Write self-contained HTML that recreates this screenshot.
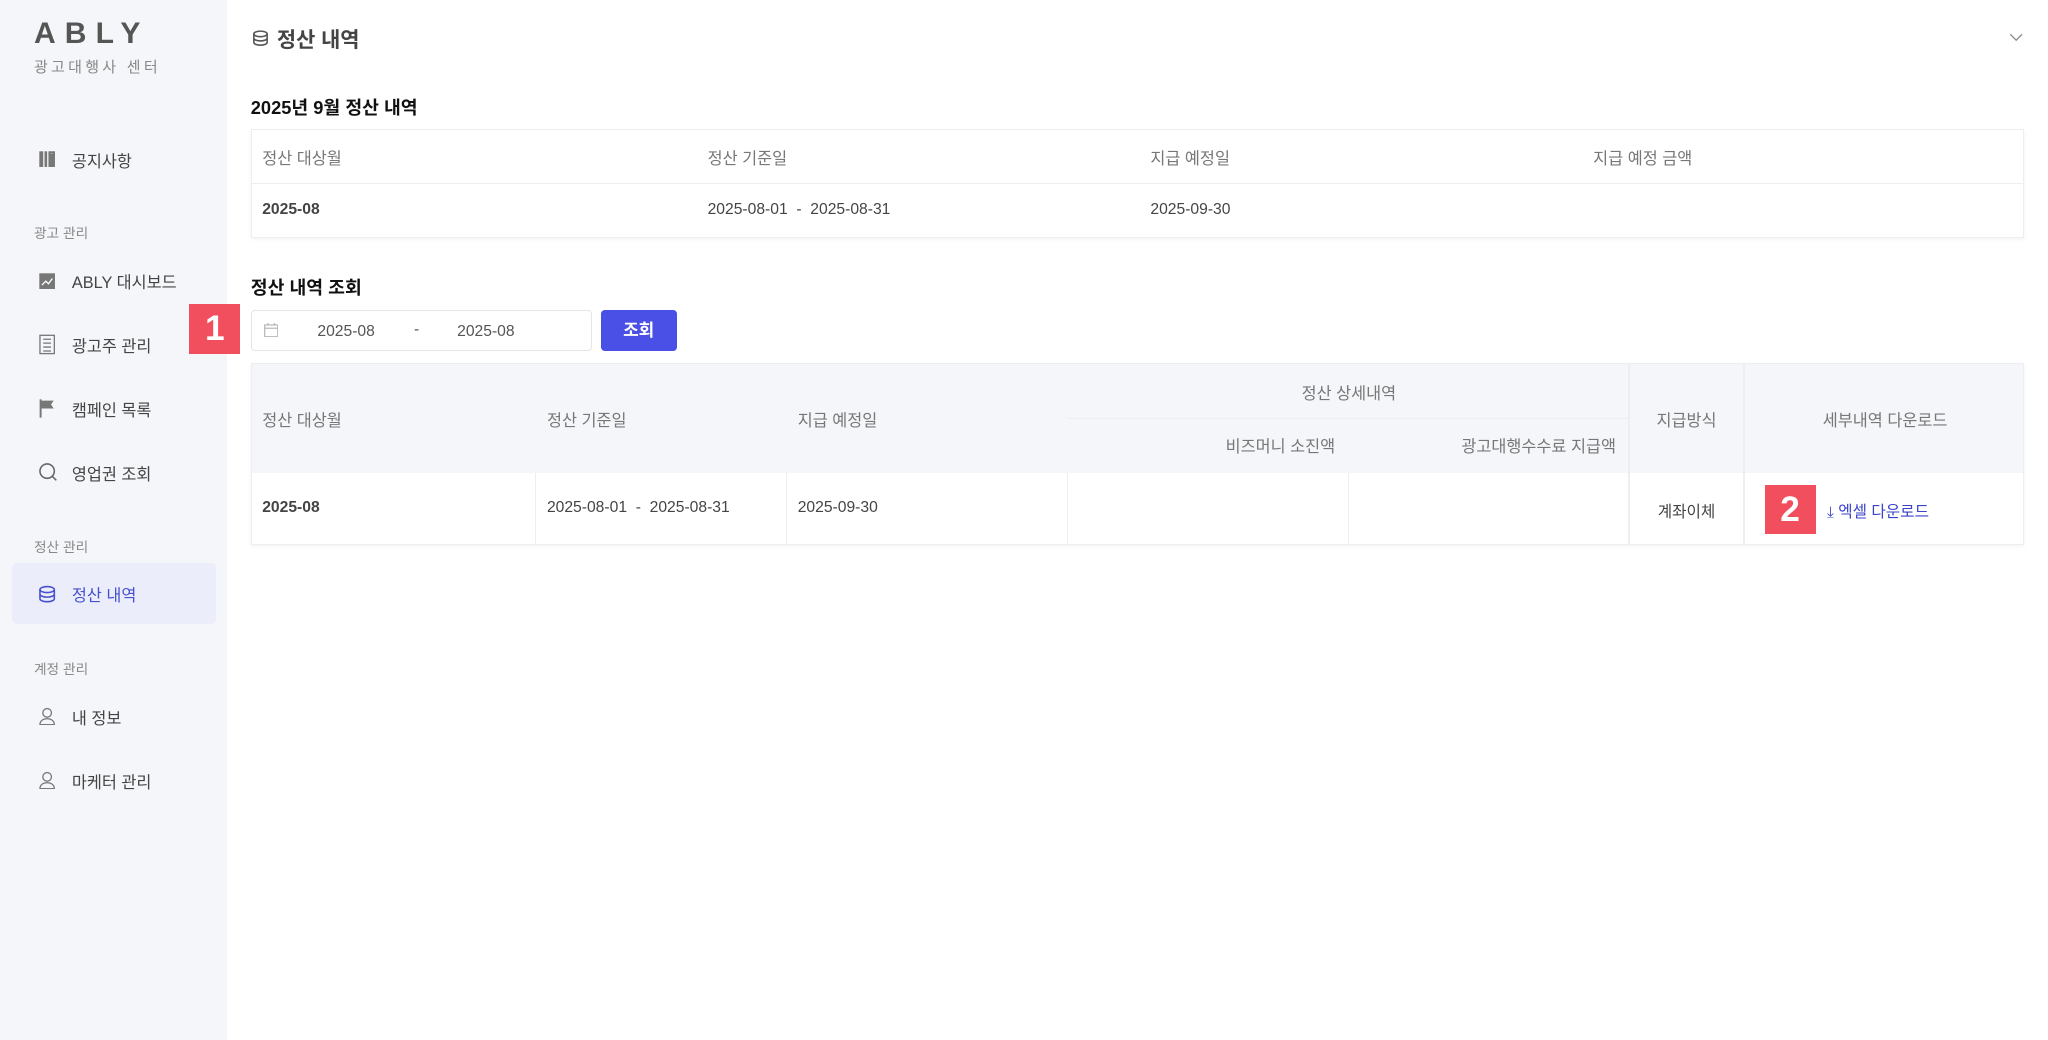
<!DOCTYPE html>
<html><head><meta charset="utf-8"><style>
*{margin:0;padding:0;box-sizing:border-box}
html,body{width:2048px;height:1040px;overflow:hidden;background:#fff}
#w{zoom:1.30612;width:1568px;height:797px;position:relative;font-family:"Liberation Sans","Noto Sans CJK KR",sans-serif;color:#333}
.a{position:absolute;white-space:nowrap}
#sb{position:absolute;left:0;top:0;width:174px;height:797px;background:#f5f6f9}
.mi{position:absolute;left:55px;font-size:12.5px;color:#444;line-height:16px}
.ic{position:absolute;left:29px}
.sec{position:absolute;left:26px;font-size:10.5px;color:#888}
.tb{position:absolute;left:192px;width:1358px;border:1px solid #eceef1;box-shadow:0 1px 3px rgba(0,0,0,.05)}
.h{font-size:12.5px;color:#777}
.c{font-size:12px;color:#444}
.badge{position:absolute;width:39px;height:38px;background:#f24f5e;color:#fff;font-weight:bold;font-size:27px;text-align:center;line-height:38px}
.vl{position:absolute;top:0;bottom:0;width:1px;background:#eceef1}
</style></head><body><div id="w">
<div id="sb">
<div class="a" style="left:26px;top:13px;font-size:23px;font-weight:bold;letter-spacing:7px;color:#555">ABLY</div>
<div class="a" style="left:26px;top:43px;font-size:11.5px;letter-spacing:2.5px;color:#888">광고대행사 센터</div>
<svg class="ic" style="top:115px" width="14" height="14" viewBox="0 0 14 14"><rect x="1" y="1" width="3" height="12" fill="#777"/><rect x="5" y="1" width="2" height="12" fill="#777"/><rect x="8" y="3" width="5" height="10" fill="#777"/><path d="M8 1h5v3l-2.5-1.5L8 4z" fill="#777"/></svg>
<div class="mi" style="top:116px">공지사항</div>
<div class="sec" style="top:170px">광고 관리</div>
<svg class="ic" style="top:208px" width="14" height="14"><rect x="1" y="1" width="12" height="12" fill="#777"/><path d="M3 10l3-3 2 2 3-4" stroke="#fff" fill="none" stroke-width="1"/></svg>
<div class="mi" style="top:209px">ABLY 대시보드</div>
<svg class="ic" style="top:256px" width="14" height="16"><rect x="1.5" y="1" width="11" height="14" fill="none" stroke="#777"/><path d="M4 4h6M4 7h6M4 10h6M4 13h6" stroke="#777"/></svg>
<div class="mi" style="top:258px">광고주 관리</div>
<svg class="ic" style="top:305px" width="14" height="16"><path d="M2 1v14" stroke="#777" stroke-width="1.5"/><path d="M2 2h10l-2 3 2 3H2z" fill="#777"/></svg>
<div class="mi" style="top:307px">캠페인 목록</div>
<svg class="ic" style="top:354px" width="16" height="16"><circle cx="7" cy="7" r="5.5" fill="none" stroke="#666" stroke-width="1.2"/><path d="M11 11l3 3" stroke="#666" stroke-width="1.2"/></svg>
<div class="mi" style="top:356px">영업권 조회</div>
<div class="sec" style="top:410px">정산 관리</div>
<div class="a" style="left:9px;top:431px;width:156px;height:47px;background:#ebedfb;border-radius:4px"></div>
<svg class="ic" style="top:448px" width="14" height="14" viewBox="0 0 14 14"><g fill="none" stroke="#4650d0" stroke-width="1.2"><ellipse cx="7" cy="3.5" rx="5.5" ry="2.3"/><path d="M1.5 3.5v7c0 1.3 2.5 2.3 5.5 2.3s5.5-1 5.5-2.3v-7M1.5 7c0 1.3 2.5 2.3 5.5 2.3s5.5-1 5.5-2.3"/></g></svg>
<div class="mi" style="top:449px;color:#4650d0">정산 내역</div>
<div class="sec" style="top:504px">계정 관리</div>
<svg class="ic" style="top:541px" width="14" height="14"><circle cx="7" cy="4.5" r="3.3" fill="none" stroke="#777"/><path d="M1.5 13.5c0-3 2.5-4.5 5.5-4.5s5.5 1.5 5.5 4.5z" fill="none" stroke="#777"/></svg>
<div class="mi" style="top:543px">내 정보</div>
<svg class="ic" style="top:590px" width="14" height="14"><circle cx="7" cy="4.5" r="3.3" fill="none" stroke="#777"/><path d="M1.5 13.5c0-3 2.5-4.5 5.5-4.5s5.5 1.5 5.5 4.5z" fill="none" stroke="#777"/></svg>
<div class="mi" style="top:592px">마케터 관리</div>
</div>

<svg class="a" style="left:193px;top:22px" width="13" height="14" viewBox="0 0 14 14"><g fill="none" stroke="#555" stroke-width="1.3"><ellipse cx="7" cy="3.5" rx="5.5" ry="2.3"/><path d="M1.5 3.5v7c0 1.3 2.5 2.3 5.5 2.3s5.5-1 5.5-2.3v-7M1.5 7c0 1.3 2.5 2.3 5.5 2.3s5.5-1 5.5-2.3"/></g></svg>
<div class="a" style="left:212px;top:18px;font-size:16px;font-weight:bold;color:#444">정산 내역</div>
<svg class="a" style="left:1538px;top:25px" width="11" height="8"><path d="M1 1l4.5 4.5L10 1" fill="none" stroke="#888"/></svg>

<div class="a" style="left:192px;top:72px;font-size:14px;font-weight:bold;color:#111">2025년 9월 정산 내역</div>
<div class="tb" style="top:99px;height:83px">
<div class="a" style="left:0;right:0;top:40px;height:1px;background:#eceef1"></div>
<div class="a h" style="left:8px;top:11px">정산 대상월</div>
<div class="a h" style="left:349px;top:11px">정산 기준일</div>
<div class="a h" style="left:688px;top:11px">지급 예정일</div>
<div class="a h" style="left:1027px;top:11px">지급 예정 금액</div>
<div class="a c" style="left:8px;top:54px;font-weight:bold">2025-08</div>
<div class="a c" style="left:349px;top:54px">2025-08-01 &nbsp;- &nbsp;2025-08-31</div>
<div class="a c" style="left:688px;top:54px">2025-09-30</div>
</div>

<div class="a" style="left:192px;top:210px;font-size:14px;font-weight:bold;color:#111">정산 내역 조회</div>
<div class="badge" style="left:145px;top:233px">1</div>
<div class="a" style="left:192px;top:237px;width:261px;height:32px;border:1px solid #e3e5e9;border-radius:3px"></div>
<svg class="a" style="left:202px;top:247px" width="11" height="11"><rect x=".5" y="1.5" width="10" height="9" fill="none" stroke="#bbb"/><path d="M.5 4h10M3 0v2M8 0v2" stroke="#bbb"/></svg>
<div class="a c" style="left:243px;top:247px;color:#555">2025-08</div>
<div class="a c" style="left:317px;top:246px;color:#555">-</div>
<div class="a c" style="left:350px;top:247px;color:#555">2025-08</div>
<div class="a" style="left:460px;top:237px;width:58px;height:32px;background:#4a4fe6;border-radius:3px;color:#fff;font-size:13px;font-weight:bold;text-align:center;line-height:32px">조회</div>

<div class="tb" style="top:278px;height:139px">
<div class="a" style="left:0;right:0;top:0;height:83px;background:#f5f6f9"></div>
<div class="a" style="left:625px;width:430px;top:41px;height:1px;background:#eceef1"></div>
<div class="vl" style="left:217px;top:83px"></div>
<div class="vl" style="left:409px;top:83px"></div>
<div class="vl" style="left:624px;top:83px"></div>
<div class="vl" style="left:839px;top:83px"></div>
<div class="vl" style="left:1054px"></div>
<div class="vl" style="left:1142px"></div>
<div class="a h" style="left:8px;top:33px">정산 대상월</div>
<div class="a h" style="left:226px;top:33px">정산 기준일</div>
<div class="a h" style="left:418px;top:33px">지급 예정일</div>
<div class="a h" style="left:625px;width:430px;text-align:center;top:12px">정산 상세내역</div>
<div class="a h" style="right:527px;top:53px">비즈머니 소진액</div>
<div class="a h" style="right:312px;top:53px">광고대행수수료 지급액</div>
<div class="a h" style="left:1055px;width:87px;text-align:center;top:33px">지급방식</div>
<div class="a h" style="left:1143px;width:215px;text-align:center;top:33px">세부내역 다운로드</div>
<div class="a c" style="left:8px;top:103px;font-weight:bold">2025-08</div>
<div class="a c" style="left:226px;top:103px">2025-08-01 &nbsp;- &nbsp;2025-08-31</div>
<div class="a c" style="left:418px;top:103px">2025-09-30</div>
<div class="a c" style="left:1055px;width:87px;text-align:center;top:103px">계좌이체</div>
<div class="a c" style="left:1206px;top:103px;color:#3a43c9">⤓ 엑셀 다운로드</div>
</div>
<div class="badge" style="left:1351px;top:371px">2</div>
</div></body></html>
